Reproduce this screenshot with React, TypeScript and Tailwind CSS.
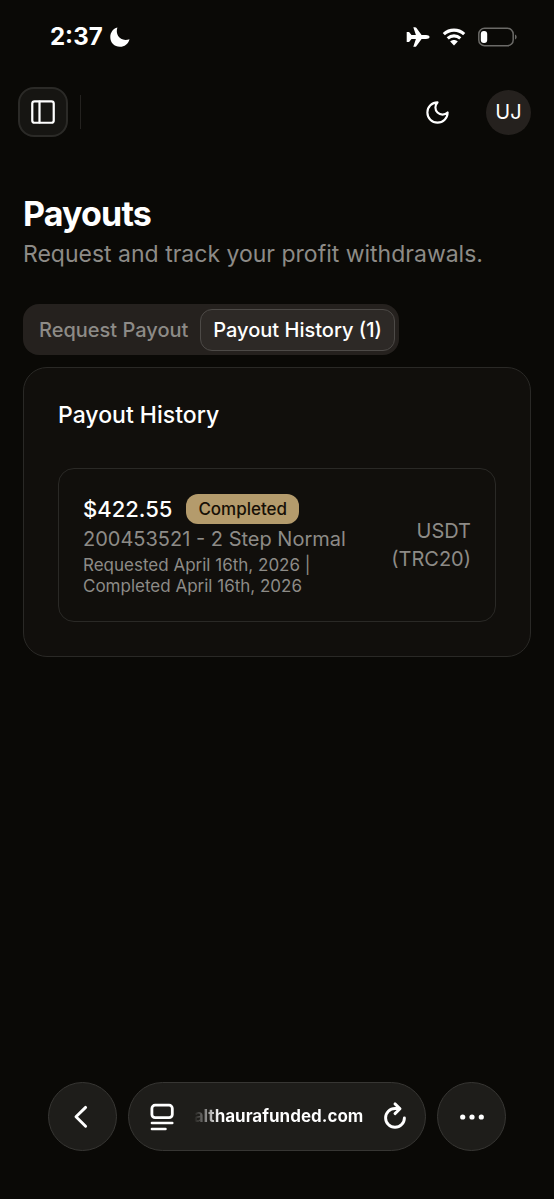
import React from "react";

function StatusBar() {
  return (
    <div className="flex h-[74px] items-center justify-between pr-9 pl-[50px] text-white">
      <div className="flex items-center gap-[7px]">
        <span className="text-2xl font-bold">2:37</span>
        <svg className="size-5" viewBox="0 0 20 20" fill="currentColor" aria-hidden="true">
          <path d="M7.4.6C4.8 7.8 10.6 15.4 19.5 12.2 18.3 16.8 14.6 19.8 9.9 19.8 4.4 19.8.3 15.7.3 10.3.3 5.6 3 1.8 7.4.6Z" />
        </svg>
      </div>
      <div className="flex items-center gap-3">
        <svg className="h-5 w-6" viewBox="0 0 24 20" fill="currentColor" aria-hidden="true">
          <path d="M23.6 10c0 1.3-1.7 2-3.6 2h-4.4l-5.3 7.2c-.3.4-.7.6-1.2.6H7.3L9.9 12H5.5l-2.2 2.7c-.2.3-.5.4-.8.4H.7V4.9h1.8c.3 0 .6.1.8.4L5.5 8h4.4L7.3.2h1.8c.5 0 .9.2 1.2.6L15.6 8H20c1.9 0 3.6.7 3.6 2Z" />
        </svg>
        <svg className="h-[18px] w-6" viewBox="0 0 24 18" fill="none" aria-hidden="true">
          <path d="M1.8 6.2C7.6.8 16.4.8 22.2 6.2" stroke="currentColor" strokeWidth="3.2" />
          <path d="M5.7 10.3c3.6-3.3 9-3.3 12.6 0" stroke="currentColor" strokeWidth="3.1" />
          <path d="M8.2 13.6c2.2-2 5.4-2 7.6 0L12 17.5z" fill="currentColor" />
        </svg>
        <svg className="h-5 w-10" viewBox="0 0 40 20" fill="none" aria-hidden="true">
          <rect x="0.8" y="1.3" width="34.4" height="17.4" rx="5.8" stroke="#6b6a67" strokeWidth="1.5" />
          <rect x="2.8" y="4" width="6.4" height="12" rx="3" fill="white" />
          <path d="M37 7.5c2.2.8 2.2 4.2 0 5z" fill="#6b6a67" />
        </svg>
      </div>
    </div>
  );
}

function Header() {
  return (
    <header className="flex h-[76px] items-center justify-between pr-[23px] pl-[18px]">
      <div className="flex items-center gap-3">
        <button
          type="button"
          aria-label="Toggle sidebar"
          className="flex size-[50px] items-center justify-center rounded-2xl border-2 border-[#2b2a27] bg-[#161512] text-white"
        >
          <svg className="size-7" viewBox="0 0 24 24" fill="none" stroke="currentColor" strokeWidth="1.9" strokeLinecap="round" strokeLinejoin="round" aria-hidden="true">
            <rect x="2.8" y="2.8" width="18.4" height="18.4" rx="2" />
            <path d="M9 3v18" />
          </svg>
        </button>
        <div className="h-[34px] w-px bg-[#24221f]" />
      </div>
      <div className="flex items-center gap-7">
        <button type="button" aria-label="Toggle theme" className="flex size-[42px] items-center justify-center text-white">
          <svg className="size-[27px]" viewBox="0 0 24 24" fill="none" stroke="currentColor" strokeWidth="1.9" strokeLinecap="round" strokeLinejoin="round" aria-hidden="true">
            <path d="M12 3a6 6 0 0 0 9 9 9 9 0 1 1-9-9Z" />
          </svg>
        </button>
        <button type="button" aria-label="Account" className="size-[45px] rounded-full bg-[#25211e] text-xl text-white">
          UJ
        </button>
      </div>
    </header>
  );
}

function PayoutItem() {
  return (
    <li className="flex items-center justify-between gap-4 rounded-2xl border border-[#2a2926] p-6">
      <div className="min-w-0">
        <div className="flex items-center gap-3.5">
          <span className="text-[22px] leading-8 font-medium text-white">$422.55</span>
          <span className="rounded-xl bg-[#b49b6c] px-3 py-[3px] text-[17px] leading-6 font-medium text-[#171006]">Completed</span>
        </div>
        <p className="text-[20px] leading-7">200453521 - 2 Step Normal</p>
        <p className="pt-0.5 text-[17px] leading-[21px]">
          Requested April 16th, 2026 |<br />
          Completed April 16th, 2026
        </p>
      </div>
      <p className="text-right text-[20px] leading-7">
        USDT
        <br />
        (TRC20)
      </p>
    </li>
  );
}

function BrowserBar() {
  return (
    <nav aria-label="Browser" className="mt-auto flex items-center justify-center gap-[11px] px-12 pb-12 text-white">
      <button type="button" aria-label="Back" className="flex size-[69px] shrink-0 items-center justify-center rounded-full border border-[#373633] bg-[#1e1d1a]">
        <svg className="h-7 w-6" viewBox="0 0 24 28" fill="none" stroke="currentColor" strokeWidth="2.9" strokeLinecap="round" strokeLinejoin="round" aria-hidden="true">
          <path d="M14.6 4.4 5 13.8l9.6 9.4" />
        </svg>
      </button>
      <div className="flex h-[69px] max-w-[299px] flex-1 items-center justify-between rounded-full border border-[#373633] bg-[#1e1d1a] pr-[18px] pl-[21px]">
        <button type="button" aria-label="Page menu">
          <svg className="h-7 w-6" viewBox="0 0 24 28" fill="none" stroke="currentColor" strokeLinecap="round" aria-hidden="true">
            <rect x="1.9" y="2.2" width="20.4" height="12.4" rx="3.2" strokeWidth="2.8" />
            <path d="M1.9 20.1h20.4M1.9 26h13.6" strokeWidth="2.5" />
          </svg>
        </button>
        <span className="bg-linear-to-r from-transparent to-white to-15% bg-clip-text text-[17px] font-bold text-transparent">
          althaurafunded.com
        </span>
        <button type="button" aria-label="Reload">
          <svg className="h-7 w-6 overflow-visible" viewBox="0 0 24 28" fill="none" stroke="currentColor" strokeWidth="2.9" strokeLinecap="round" strokeLinejoin="round" aria-hidden="true">
            <path d="M16 5.5H12A9.4 9.4 0 1 0 21.4 14.9" />
            <path d="M12 .9 17 5.7 12 10.6" />
          </svg>
        </button>
      </div>
      <button type="button" aria-label="More" className="flex size-[69px] shrink-0 items-center justify-center rounded-full border border-[#373633] bg-[#1e1d1a]">
        <svg className="h-2 w-6" viewBox="0 0 24 8" fill="currentColor" aria-hidden="true">
          <circle cx="2.7" cy="4" r="2.6" />
          <circle cx="12" cy="4" r="2.6" />
          <circle cx="21.3" cy="4" r="2.6" />
        </svg>
      </button>
    </nav>
  );
}

export default function App() {
  return (
    <div className="flex min-h-screen flex-col bg-[#0a0906] font-['Inter',sans-serif] text-[#8d8b87]">
      <StatusBar />
      <Header />
      <main className="px-[23px] pt-11 pb-8">
        <h1 className="text-[34px] leading-10 font-bold tracking-tight text-white">Payouts</h1>
        <p className="text-[23px] leading-10">Request and track your profit withdrawals.</p>
        <div role="tablist" className="mt-[30px] flex h-[51px] w-fit items-center rounded-2xl bg-[#25211e] p-1 text-[20px] font-medium">
          <button type="button" role="tab" aria-selected="false" className="h-[42px] px-3">
            Request Payout
          </button>
          <button type="button" role="tab" aria-selected="true" className="h-[42px] rounded-xl border border-[#4d4a47] bg-[#2d2926] px-3 text-white">
            Payout History (1)
          </button>
        </div>
        <section className="mt-3 rounded-3xl border border-[#2a2926] bg-[#110f0c] p-[34px]">
          <h2 className="mb-10 text-[23px] leading-[26px] font-medium text-white">Payout History</h2>
          <ul>
            <PayoutItem />
          </ul>
        </section>
      </main>
      <BrowserBar />
    </div>
  );
}
